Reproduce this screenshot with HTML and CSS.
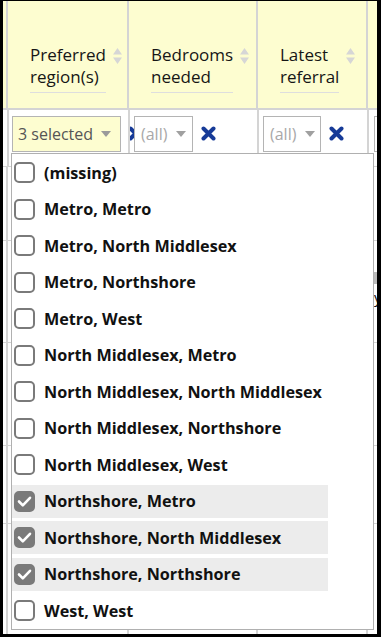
FILE: index.html
```html
<!DOCTYPE html>
<html lang="en">

<head>
    <meta charset="UTF-8">
    <meta name="viewport" content="width=device-width, initial-scale=1.0">
    <title>Referrals</title>
    <link rel="stylesheet" href="styles.css">
</head>

<body>
    <div class="frame">
        <div class="table">
            <!-- header -->
            <div class="row head">
                <div class="cell edge"></div>
                <div class="cell c1">
                    <span class="th-label">Preferred<br>region(s)</span>
                    <svg class="sort" width="9" height="16" viewBox="0 0 9 16"><path d="M4.5 0 9 6.5H0Z M4.5 16 9 9.5H0Z" fill="#d6d6d6"/></svg>
                </div>
                <div class="cell c2">
                    <span class="th-label">Bedrooms<br>needed</span>
                    <svg class="sort" width="9" height="16" viewBox="0 0 9 16"><path d="M4.5 0 9 6.5H0Z M4.5 16 9 9.5H0Z" fill="#d6d6d6"/></svg>
                </div>
                <div class="cell c3">
                    <span class="th-label">Latest<br>referral</span>
                    <svg class="sort" width="9" height="16" viewBox="0 0 9 16"><path d="M4.5 0 9 6.5H0Z M4.5 16 9 9.5H0Z" fill="#d6d6d6"/></svg>
                </div>
                <div class="cell c4"></div>
            </div>

            <!-- filters -->
            <div class="row filters">
                <div class="cell edge"></div>
                <div class="cell c1">
                    <div class="select active w1">3 selected <span class="caret"></span></div>
                    <svg class="clear" width="15" height="15" viewBox="0 0 15 15"><path d="M2.5 2.5 12.5 12.5 M12.5 2.5 2.5 12.5" stroke="#173b98" stroke-width="4" stroke-linecap="round"/></svg>
                </div>
                <div class="cell c2">
                    <div class="select w2">(all) <span class="caret"></span></div>
                    <svg class="clear" width="15" height="15" viewBox="0 0 15 15"><path d="M2.5 2.5 12.5 12.5 M12.5 2.5 2.5 12.5" stroke="#173b98" stroke-width="4" stroke-linecap="round"/></svg>
                </div>
                <div class="cell c3">
                    <div class="select w3">(all) <span class="caret"></span></div>
                    <svg class="clear" width="15" height="15" viewBox="0 0 15 15"><path d="M2.5 2.5 12.5 12.5 M12.5 2.5 2.5 12.5" stroke="#173b98" stroke-width="4" stroke-linecap="round"/></svg>
                </div>
                <div class="cell c4">
                    <div class="select w4"></div>
                </div>
            </div>

            <!-- rows (mostly under the dropdown) -->
            <div class="row body h74">
                <div class="cell edge"></div>
                <div class="cell c1"></div>
                <div class="cell c2"></div>
                <div class="cell c3"></div>
                <div class="cell c4"></div>
            </div>
            <div class="row body h102">
                <div class="cell edge"></div>
                <div class="cell c1"></div>
                <div class="cell c2"></div>
                <div class="cell c3"></div>
                <div class="cell c4"><span class="sum">Σ</span><span class="yes">y</span></div>
            </div>
            <div class="row body h103">
                <div class="cell edge"></div>
                <div class="cell c1"></div>
                <div class="cell c2"></div>
                <div class="cell c3"></div>
                <div class="cell c4"></div>
            </div>
            <div class="row body h78">
                <div class="cell edge"></div>
                <div class="cell c1"></div>
                <div class="cell c2"></div>
                <div class="cell c3"></div>
                <div class="cell c4"></div>
            </div>
            <div class="row body h120">
                <div class="cell edge"></div>
                <div class="cell c1"></div>
                <div class="cell c2"></div>
                <div class="cell c3"></div>
                <div class="cell c4"></div>
            </div>
        </div>

        <!-- region filter popup -->
        <div class="dropdown">
            <ul class="options">
                <li><span class="box"></span>(missing)</li>
                <li><span class="box"></span>Metro, Metro</li>
                <li><span class="box"></span>Metro, North Middlesex</li>
                <li><span class="box"></span>Metro, Northshore</li>
                <li><span class="box"></span>Metro, West</li>
                <li><span class="box"></span>North Middlesex, Metro</li>
                <li><span class="box"></span>North Middlesex, North Middlesex</li>
                <li><span class="box"></span>North Middlesex, Northshore</li>
                <li><span class="box"></span>North Middlesex, West</li>
                <li class="checked"><span class="box"><svg width="21" height="21" viewBox="0 0 21 21"><path d="M5 10.5 8.8 14.3 16 6.8" fill="none" stroke="#fff" stroke-width="2.6" stroke-linecap="round" stroke-linejoin="round"/></svg></span>Northshore, Metro</li>
                <li class="checked"><span class="box"><svg width="21" height="21" viewBox="0 0 21 21"><path d="M5 10.5 8.8 14.3 16 6.8" fill="none" stroke="#fff" stroke-width="2.6" stroke-linecap="round" stroke-linejoin="round"/></svg></span>Northshore, North Middlesex</li>
                <li class="checked"><span class="box"><svg width="21" height="21" viewBox="0 0 21 21"><path d="M5 10.5 8.8 14.3 16 6.8" fill="none" stroke="#fff" stroke-width="2.6" stroke-linecap="round" stroke-linejoin="round"/></svg></span>Northshore, Northshore</li>
                <li><span class="box"></span>West, West</li>
            </ul>
        </div>
    </div>
</body>

</html>
```

FILE: styles.css
```css
body {
    margin: 0;
    font-family: 'Open Sans', Arial, sans-serif;
    font-size: 16px;
    color: #111;
    background: #fff;
}

.frame {
    width: 381px;
    height: 637px;
    box-sizing: border-box;
    border: solid #000;
    border-width: 1px 4px 3px 3px;
    overflow: hidden;
    position: relative;
}

.row {
    display: flex;
}

.cell {
    box-sizing: border-box;
    border-left: 2px solid #d4d4d4;
    flex: none;
}

.edge {
    width: 3px;
    border-left: none;
}

.c1 { width: 121px; }
.c2 { width: 129px; }
.c3 { width: 110px; }
.c4 { flex: 1; }

/* header */
.head {
    height: 107px;
    background-color: #fdfdd0;
    border-bottom: 2px solid #d4d4d4;
}

.head .cell {
    display: flex;
    align-items: flex-end;
    padding: 0 0 15px 22px;
}

.head .edge {
    padding: 0;
}

.th-label {
    display: inline-block;
    font-size: 17px;
    line-height: 22px;
    padding-bottom: 4px;
    border-bottom: 1px solid #dedede;
    white-space: nowrap;
    color: #161616;
}

.sort {
    flex: none;
    margin: 0 0 29px 7px;
}

/* filters */
.filters {
    height: 56px;
    border-bottom: 1px solid #d4d4d4;
}

.filters .cell {
    display: flex;
    align-items: flex-start;
    padding: 6px 0 0 4px;
}

.filters .c1 {
    padding-left: 3px;
}

.select {
    box-sizing: border-box;
    height: 36px;
    line-height: 34px;
    border: 1px solid #b4b4b4;
    background: #fff;
    color: #a8a8a8;
    padding-left: 6px;
    white-space: nowrap;
    position: relative;
    z-index: 1;
    flex: none;
}

.select.active {
    background: #fdfdd0;
    color: #555;
    padding-left: 5px;
}

.w1 { width: 109px; }
.w2 { width: 59px; }
.w3 { width: 58px; }
.w4 { width: 20px; margin-left: 1px; }

.caret {
    display: inline-block;
    width: 0;
    height: 0;
    border-left: 5.5px solid transparent;
    border-right: 5.5px solid transparent;
    border-top: 6px solid #a0a0a0;
    vertical-align: middle;
    margin-left: 4px;
    position: relative;
    top: -2px;
}

.select.active .caret {
    border-top-color: #9a9a9a;
}

.clear {
    flex: none;
    margin: 10px 0 0 8px;
}

.filters .c1 .clear {
    margin-left: 7px;
}

/* body rows */
.body {
    border-bottom: 1px solid #d4d4d4;
}

.h74 { height: 73px; }
.h102 { height: 101px; }
.h103 { height: 102px; }
.h78 { height: 77px; }
.h120 { height: 120px; }

.sum {
    display: inline-block;
    margin: 31px 0 0 6px;
    width: 12px;
    height: 12px;
    background: #bbb;
    color: #fff;
    font-size: 10px;
    line-height: 12px;
    text-align: center;
}

.yes {
    display: block;
    margin-left: 6px;
    font-size: 15px;
}

/* dropdown */
.dropdown {
    position: absolute;
    left: 8px;
    top: 152px;
    width: 363px;
    height: 477px;
    box-sizing: border-box;
    border: 1px solid #b0b0b0;
    background: #fff;
    z-index: 2;
    padding: 2px 0 0 0;
}

.options {
    list-style: none;
    margin: 0;
    padding: 0;
    display: inline-flex;
    flex-direction: column;
    gap: 3.5px;
}

.options li {
    display: flex;
    align-items: center;
    height: 33px;
    padding: 0 6px 0 2px;
    font-size: 16.2px;
    font-weight: 700;
    color: #111;
    white-space: nowrap;
}

.options li.checked {
    background-color: #ececec;
}

.box {
    box-sizing: border-box;
    width: 21px;
    height: 21px;
    border: 2px solid #7a7a7a;
    border-radius: 5px;
    background: #fff;
    margin-right: 9px;
    flex: none;
    position: relative;
}

.checked .box {
    background: #7a7a7a;
}

.box svg {
    position: absolute;
    left: -2px;
    top: -2px;
}
```
